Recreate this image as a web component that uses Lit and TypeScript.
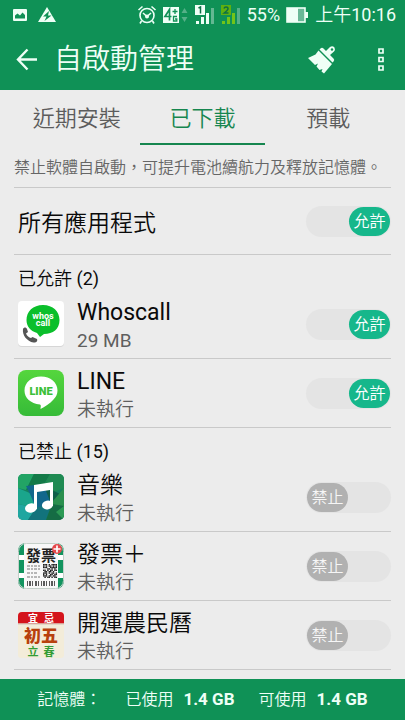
import { LitElement, html, css, svg, nothing } from "lit";
import { customElement, property, state } from "lit/decorators.js";
import { classMap } from "lit/directives/class-map.js";

interface AppItem {
  id: string;
  name: string;
  detail: string;
  allowed: boolean;
}

const musicIcon = svg`
  <defs><clipPath id="mc"><rect width="46" height="46" rx="5" /></clipPath></defs>
  <g clip-path="url(#mc)">
    <rect width="46" height="46" fill="#14825f" />
    <path d="M0 0H16L8 16L0 14Z" fill="#22a465" />
    <path d="M16 0H32L24 14L8 16Z" fill="#137a48" />
    <path d="M32 0H46V14L36 18L24 14Z" fill="#1f8a52" />
    <path d="M0 14L14 20L18 34L0 30Z" fill="#1aa58c" />
    <path d="M8 12L26 10L34 30L18 34L12 20Z" fill="#11678c" />
    <path d="M26 12L46 22L34 32Z" fill="#0e5f4a" />
    <path d="M46 14V32L36 36L34 28Z" fill="#2a8f4e" />
    <path d="M0 30L18 34L10 46H0Z" fill="#1fa6a0" />
    <path d="M18 34L34 30L28 46H10Z" fill="#12737c" />
    <path d="M34 30L46 32V46H28Z" fill="#156c44" />
    <path d="M38 38L46 32V46Z" fill="#2c9a55" />
  </g>
  <path d="M16 11L35 8V32H32V16L19 18V35H16Z" fill="#fff" />
  <ellipse cx="13" cy="34" rx="6" ry="4.6" transform="rotate(-12 13 34)" fill="#fff" />
  <ellipse cx="29.500" cy="31" rx="5.600" ry="4.400" transform="rotate(-12 29.5 31)" fill="#fff" />`;

const qrCells = [
  "1110101111", "1010110101", "1110011111", "0001101010", "1101011011",
  "0110110100", "1110101101", "1010011011", "1110110110", "0101101011",
];
const bars = [1, 3, 4, 6, 9, 10, 12, 15, 17, 18, 20, 23, 25, 26, 28];

const receiptIcon = svg`
  <defs><clipPath id="rc"><rect width="46" height="46" rx="8" /></clipPath></defs>
  <g clip-path="url(#rc)">
    <rect width="46" height="46" fill="#fff" />
    <path d="M0 0H46V12H0ZM0 17H46V30H0ZM0 35H46V46H0Z" fill="#12945f" />
    <path d="M6 0H40V46H6Z" fill="#f8f8f8" />
    <text x="23" y="18" text-anchor="middle" class="cjk" font-size="15" font-weight="700" fill="#222">發票</text>
    <path d="M9 23H23M9 26H22M9 30H19M9 34H22" stroke="#777" stroke-dasharray="3 1 2 1" />
    ${qrCells.map((row, y) =>
      [...row].map((c, x) =>
        c === "1" ? svg`<rect x=${25 + x * 1.4} y=${21 + y * 1.4} width="1.4" height="1.4" fill="#222" />` : nothing))}
    ${bars.map((x) => svg`<rect x=${8 + x} y="38" width=".8" height="5" fill="#333" />`)}
  </g>
  <rect x=".5" y=".5" width="45" height="45" rx="8" fill="none" stroke="#c4cfc8" />
  <circle cx="39" cy="6" r="5" fill="#e5484b" />
  <path d="M39 2.500V9.500M35.500 6H42.500" stroke="#fff" stroke-width="1.700" />`;

const almanacIcon = svg`
  <rect width="46" height="46" rx="3" fill="#f3ecd9" />
  <path d="M0 12V4Q0 0 4 0H42Q46 0 46 4V12Z" fill="#d4141c" />
  <path d="M0 12H46" stroke="#ddd1c0" stroke-width="1.500" />
  <g class="cjk" text-anchor="middle" font-weight="700">
    <text x="15" y="10" font-size="10" fill="#fff">宜</text>
    <text x="31" y="10" font-size="10" fill="#fff">忌</text>
    <text x="23" y="30" font-size="17" font-weight="900" fill="#b8400c">初五</text>
    <text x="15" y="44" font-size="11" fill="#329c34">立</text>
    <text x="31" y="44" font-size="11" fill="#329c34">春</text>
  </g>`;

const whoscallIcon = svg`
  <rect y="1" width="46" height="45" rx="4" fill="#d6d6d6" />
  <rect width="46" height="45" rx="4" fill="#fff" />
  <path d="M25 4C35 4 41.500 10.500 41.500 19C41.500 28 35 33 26 33L22 36L19 32C12 30 8.500 25 8.500 19C8.500 10.500 15 4 25 4Z" fill="#0bbf2b" />
  <g class="latin" text-anchor="middle" font-weight="700" font-size="9" fill="#fff">
    <text x="25" y="18">whos</text>
    <text x="25" y="25">call</text>
  </g>
  <path d="M5 28C6 26 8 26 9 28L10 31L8 32.500C9 35 11 36.500 13 37L14.500 36L19 38C20 40 18 42 15.500 41.500C9 40.500 4 34 5 28Z" fill="#555" />`;

const lineIcon = svg`
  <defs><linearGradient id="lg" x2="0" y2="1"><stop stop-color="#55d63d" /><stop offset="1" stop-color="#36bb38" /></linearGradient></defs>
  <rect width="46" height="46" rx="8" fill="url(#lg)" />
  <path d="M23 6.500C32.500 6.500 39.500 12.500 39.500 20.500C39.500 24 38 27 35.500 29.500C32 33.500 26.500 37 22.500 39C22.500 37 23.500 35 22 34.500C12.500 33.500 6.500 28 6.500 20.500C6.500 12.500 13.500 6.500 23 6.500Z" fill="#fff" />
  <text x="23" y="25" class="latin" text-anchor="middle" font-size="11" font-weight="900" fill="#3cc038">LINE</text>`;

const icons: Record<string, unknown> = {
  whoscall: whoscallIcon,
  line: lineIcon,
  music: musicIcon,
  receipt: receiptIcon,
  almanac: almanacIcon,
};

@customElement("status-bar")
export class StatusBar extends LitElement {
  static styles = css`
    :host {
      display: flex;
      align-items: center;
      height: 30px;
      padding: 0 9px 0 12px;
      color: #eefff6;
      font-size: 18px;
      line-height: 30px;
      white-space: nowrap;
    }
    svg { display: block; flex: none; }
    .left, .right { display: flex; align-items: center; }
    .left { gap: 9px; }
    .right { margin-left: auto; gap: 6px; }
    .time { padding-left: 1px; }
  `;

  private signal(num: string, on: string, off: string, box: string) {
    return html`<svg width="20" height="22" viewBox="0 0 20 22" aria-hidden="true">
      <rect x="0" y="1" width="10" height="10" fill=${box} />
      <path d=${num === "1" ? "M3.500 4L5.500 3V9.500" : "M3 4.500Q3.500 3 5 3Q7 3 7 4.700Q7 6 3.200 9H7.500"} fill="none" stroke="#0d6f45" stroke-width="1.500" />
      <rect x="1" y="17" width="3" height="3" fill=${on} />
      <rect x="6" y="13" width="3" height="7" fill=${on} />
      <rect x="11" y="9" width="3" height="11" fill=${on} />
      <rect x="16" y="4" width="3" height="16" fill=${off} />
    </svg>`;
  }

  render() {
    return html`
      <div class="left">
        <svg width="16" height="14" viewBox="0 0 16 14" aria-hidden="true">
          <rect x="1" y="1" width="14" height="12" rx="1" fill="#eefff6" />
          <path d="M3 10.500V7.500L5.500 5.500L8 7.500L10.500 4.500L13 7V10.500Z" fill="#0f9156" />
        </svg>
        <svg width="20" height="16" viewBox="0 0 20 16" aria-hidden="true">
          <path d="M10 0L19 15H1Z" fill="#eefff6" />
          <path d="M12 4L6 9.500H9.500L7.500 14L14.500 8.500H11Z" fill="#0f9156" />
        </svg>
      </div>
      <div class="right">
        <svg width="20" height="20" viewBox="0 0 20 20" fill="none" stroke="#eefff6" stroke-width="1.600" aria-hidden="true">
          <circle cx="10" cy="10.500" r="7" />
          <path d="M1.500 5L5.500 1.500M18.500 5L14.500 1.500M4.500 16L3 18.500M15.500 16L17 18.500M6 8L10 11.500L14 8" />
          <circle cx="10" cy="11.500" r="1.200" />
        </svg>
        <svg width="26" height="18" viewBox="0 0 26 18" aria-hidden="true">
          <rect y="1" width="16" height="16" fill="#eefff6" />
          <path d="M6.500 14.500V3.500L2 10.500H8.500" fill="none" stroke="#0f9156" stroke-width="1.700" />
          <path d="M12 3V8M9.500 5.500H14.500M14 10.500H10.500V15H13.800V13H12" fill="none" stroke="#0f9156" stroke-width="1.300" />
          <path d="M18.500 7L21.500 2L24.500 7ZM18.500 11L21.500 16L24.500 11Z" fill="#55b088" />
        </svg>
        ${this.signal("1", "#eefff6", "#63b892", "#eefff6")}
        ${this.signal("2", "#72c419", "#55b088", "#5fb010")}
        <span>55%</span>
        <svg width="22" height="18" viewBox="0 0 22 18" aria-hidden="true">
          <rect x="1" y="2" width="18" height="14" fill="#6ab897" stroke="#eefff6" stroke-width="1.600" />
          <rect x="1" y="2" width="11" height="14" fill="#eefff6" />
          <rect x="19" y="6" width="3" height="6" fill="#eefff6" />
        </svg>
        <span class="time">上午10:16</span>
      </div>
    `;
  }
}

@customElement("permit-switch")
export class PermitSwitch extends LitElement {
  static styles = css`
    :host { display: block; flex: none; }
    .switch {
      display: flex;
      box-sizing: border-box;
      position: relative;
      width: 85px;
      height: 31px;
      padding: 1px;
      border-radius: 16px;
      background: #e4e4e4;
      cursor: pointer;
    }
    .box {
      appearance: none;
      position: absolute;
      inset: 0;
      margin: 0;
      border-radius: 16px;
      cursor: pointer;
    }
    .knob {
      width: 41px;
      height: 29px;
      border-radius: 15px;
      background: #b1b1b1;
      color: #f6f6f6;
      font-size: 16px;
      line-height: 30px;
      text-align: center;
    }
    .on .knob { margin-left: auto; background: #16b78b; color: #fff; }
  `;

  @property({ type: Boolean }) checked = false;
  @property() label = "";

  private toggle(e: Event) {
    this.checked = (e.target as HTMLInputElement).checked;
  }

  render() {
    return html`<label class=${classMap({ switch: true, on: this.checked })}>
      <input class="box" type="checkbox" role="switch" aria-label=${this.label}
        .checked=${this.checked} @change=${this.toggle} />
      <span class="knob">${this.checked ? "允許" : "禁止"}</span>
    </label>`;
  }
}

@customElement("app-row")
export class AppRow extends LitElement {
  static styles = css`
    :host {
      display: flex;
      align-items: center;
      height: 68px;
      padding-left: 4px;
      border-bottom: 1px solid #c9c9c9;
    }
    .icon { display: block; flex: none; margin-right: 13px; overflow: visible; }
    .texts { flex: 1; min-width: 0; padding-top: 6px; }
    .name, .detail {
      overflow: hidden;
      white-space: nowrap;
      text-overflow: ellipsis;
      line-height: 28px;
    }
    .name { color: #0a0a0a; font-size: 23px; }
    .detail { color: #5f5f5f; font-size: 19px; }
    .cjk { font-family: "Noto Sans CJK TC", sans-serif; }
    .latin { font-family: Roboto, sans-serif; }
  `;

  @property({ attribute: false }) item!: AppItem;

  render() {
    const { id, name, detail, allowed } = this.item;
    return html`
      <svg class="icon" width="46" height="46" viewBox="0 0 46 46" aria-hidden="true">${icons[id]}</svg>
      <div class="texts">
        <div class="name">${name}</div>
        <div class="detail">${detail}</div>
      </div>
      <permit-switch .checked=${allowed} .label=${name}></permit-switch>
    `;
  }
}

@customElement("app-root")
export class AppRoot extends LitElement {
  static styles = css`
    :host {
      display: flex;
      flex-direction: column;
      min-height: 100vh;
      background: #ececec;
      color: #0a0a0a;
      font-family: Roboto, "Noto Sans CJK TC DemiLight", "Noto Sans CJK TC", sans-serif;
    }
    .top { background: #0f9156; }
    .bar {
      display: flex;
      align-items: center;
      height: 60px;
      padding: 0 14px;
      color: #eefff6;
    }
    .tool {
      display: block;
      padding: 0;
      border: 0;
      background: none;
      color: inherit;
      cursor: pointer;
    }
    .tool svg { display: block; }
    .title {
      flex: 1;
      margin: 0 0 0 14px;
      font-size: 28px;
      font-weight: 400;
      line-height: 60px;
    }
    .more { margin-left: 30px; }
    .content { padding: 0 14px; }
    .tabs { display: flex; }
    .tab {
      flex: 1;
      height: 55px;
      padding: 2px 0 0;
      border: 0;
      border-bottom: 2px solid transparent;
      background: none;
      color: #5c5c5c;
      font: inherit;
      font-size: 22px;
      line-height: 53px;
      cursor: pointer;
    }
    .tab.active { border-color: #16864f; color: #16864f; }
    .hint {
      margin: 0;
      padding: 8px 0 4px;
      border-bottom: 1px solid #c9c9c9;
      color: #666;
      font-size: 16px;
      line-height: 30px;
      white-space: nowrap;
    }
    .all {
      display: flex;
      align-items: center;
      justify-content: space-between;
      height: 66px;
      padding-left: 4px;
      border-bottom: 1px solid #c9c9c9;
      font-size: 23px;
    }
    .heading {
      margin: 0;
      padding: 12px 0 0 4px;
      font-size: 18px;
      font-weight: 400;
      line-height: 23px;
    }
    .memory {
      display: flex;
      justify-content: center;
      gap: 24px;
      margin-top: auto;
      background: #0f9156;
      color: #eefff6;
      font-size: 16px;
      line-height: 41px;
      white-space: nowrap;
    }
    .amount { margin-left: 10px; font-size: 17px; font-weight: 700; }
  `;

  @state() private tab = 1;

  private tabs = ["近期安裝", "已下載", "預載"];

  private items: AppItem[] = [
    { id: "whoscall", name: "Whoscall", detail: "29 MB", allowed: true },
    { id: "line", name: "LINE", detail: "未執行", allowed: true },
    { id: "music", name: "音樂", detail: "未執行", allowed: false },
    { id: "receipt", name: "發票＋", detail: "未執行", allowed: false },
    { id: "almanac", name: "開運農民曆", detail: "未執行", allowed: false },
  ];

  private group(title: string, allowed: boolean) {
    return html`<section>
      <h2 class="heading">${title}</h2>
      ${this.items.filter((i) => i.allowed === allowed).map((i) => html`<app-row .item=${i}></app-row>`)}
    </section>`;
  }

  render() {
    return html`
      <header class="top">
        <status-bar></status-bar>
        <div class="bar">
          <button class="tool" aria-label="返回">
            <svg width="26" height="26" viewBox="0 0 26 26" fill="none" stroke="currentColor" stroke-width="2.400">
              <path d="M13.500 2.500L4 12.500L13.500 22.500M4 12.500H23" />
            </svg>
          </button>
          <h1 class="title">自啟動管理</h1>
          <button class="tool" aria-label="清理">
            <svg width="30" height="30" viewBox="0 0 30 30" fill="currentColor">
              <path d="M13.500 3.500Q15 2 16.500 3.500L19 6L23 2Q25.500 0.500 27.500 2.500Q28.500 4.500 27 6.500L23 10L26.500 13.500Q28 15 26.500 16.500L25.500 17.500L12.500 4.500Z" />
              <path d="M11.500 5.500L25 19L17 28.500L14.500 26.500L15.500 24L12.500 25L9.500 21.500L11 18.500L8 20L1 13L8.500 9.500Z" />
              <circle cx="25" cy="4.500" r="1.200" fill="#0f9156" />
            </svg>
          </button>
          <button class="tool more" aria-label="更多選項">
            <svg width="24" height="26" viewBox="0 0 24 26" fill="none" stroke="currentColor" stroke-width="1.700">
              <path d="M12 2H16V6H12ZM12 10.500H16V14.500H12ZM12 19H16V23H12Z" />
            </svg>
          </button>
        </div>
      </header>
      <main class="content">
        <div class="tabs" role="tablist">
          ${this.tabs.map((t, i) => html`<button role="tab" aria-selected=${i === this.tab}
            class=${classMap({ tab: true, active: i === this.tab })} @click=${() => (this.tab = i)}>${t}</button>`)}
        </div>
        <p class="hint">禁止軟體自啟動，可提升電池續航力及釋放記憶體。</p>
        <div class="all">
          <span>所有應用程式</span>
          <permit-switch .checked=${true} .label=${"所有應用程式"}></permit-switch>
        </div>
        ${this.group("已允許 (2)", true)}
        ${this.group("已禁止 (15)", false)}
      </main>
      <footer class="memory">
        <span>記憶體：</span>
        <span>已使用<b class="amount">1.4 GB</b></span>
        <span>可使用<b class="amount">1.4 GB</b></span>
      </footer>
    `;
  }
}
